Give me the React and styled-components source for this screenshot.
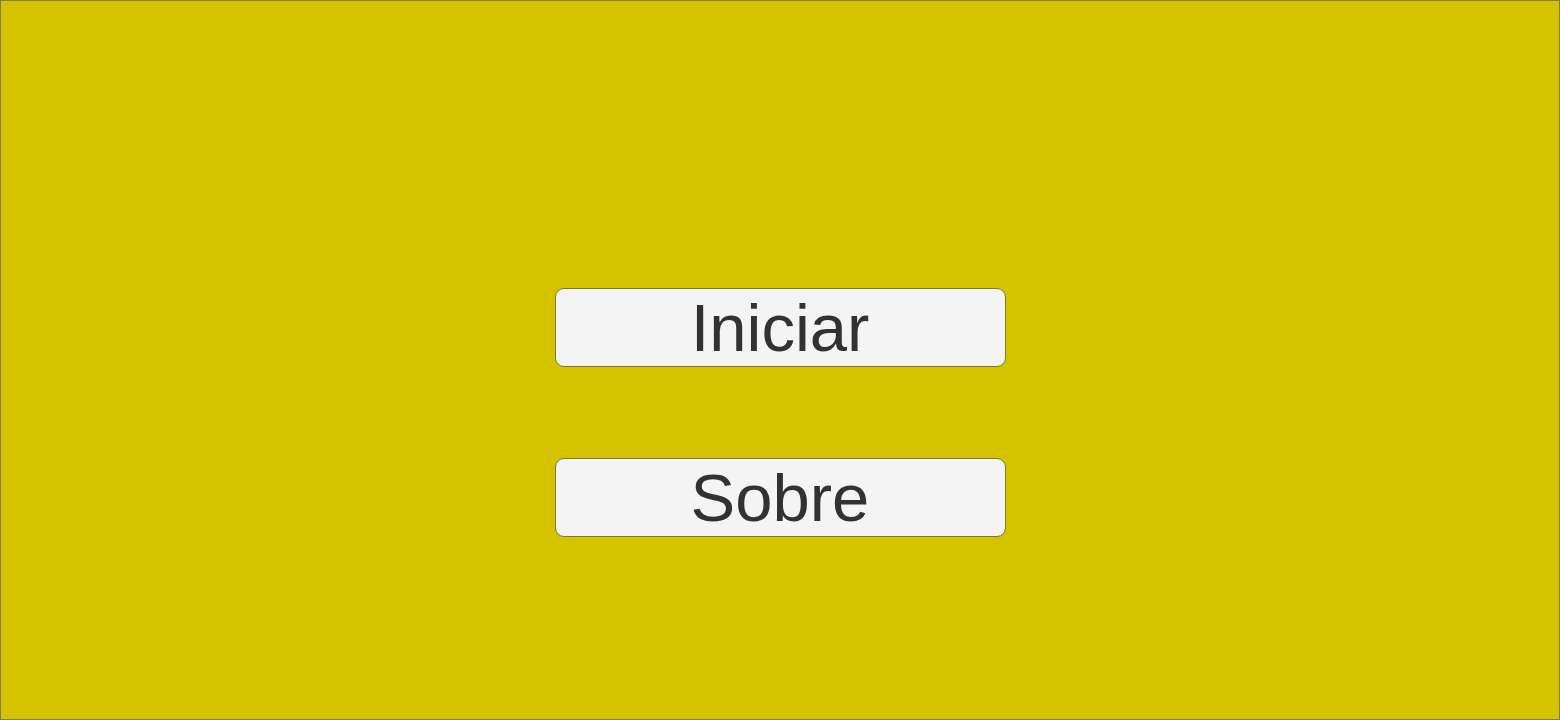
import React from "react";
import styled, { createGlobalStyle } from "styled-components";

const GlobalStyle = createGlobalStyle`
  html, body {
    margin: 0;
    padding: 0;
  }
  body {
    font-family: "Liberation Sans", Arial, sans-serif;
  }
`;

const Screen = styled.div`
  box-sizing: border-box;
  width: 1560px;
  height: 720px;
  background-color: #d6c300;
  border: 1px solid #7d7a4c;
  display: flex;
  flex-direction: column;
  align-items: center;
  padding-top: 287px;
  gap: 91px;
`;

const MenuButton = styled.button`
  box-sizing: border-box;
  width: 451px;
  height: 79px;
  background-color: #f4f4f4;
  border: 1px solid #7e7730;
  border-radius: 9px;
  font-family: "Liberation Sans", Arial, sans-serif;
  font-size: 67px;
  line-height: 1;
  color: #323232;
  display: flex;
  align-items: center;
  justify-content: center;
  padding: 0;
  cursor: pointer;
`;

export default function App() {
  return (
    <>
      <GlobalStyle />
      <Screen>
        <MenuButton>Iniciar</MenuButton>
        <MenuButton>Sobre</MenuButton>
      </Screen>
    </>
  );
}
